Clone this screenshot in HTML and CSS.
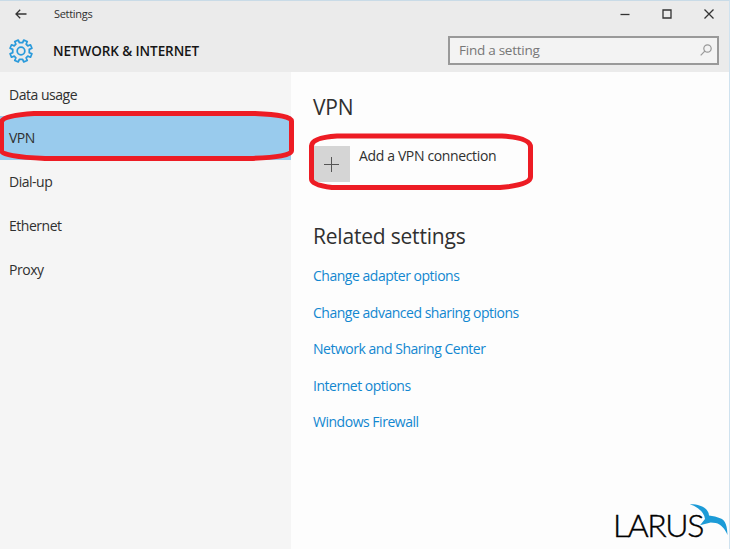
FILE: index.html
```html
<!DOCTYPE html>
<html lang="en">
<head>
<meta charset="utf-8">
<title>Settings</title>
<link rel="stylesheet" href="styles.css">
</head>
<body>
<div class="window">
  <header class="header">
    <div class="titlebar">
      <svg class="back" width="12" height="10" viewBox="0 0 12 10"><path d="M11.5 5H1M5.200.8 1 5l4.200 4.200"/></svg>
      <span class="app-name">Settings</span>
      <div class="controls">
        <svg width="10" height="10" viewBox="0 0 10 10"><path d="M.5 5.500h9"/></svg>
        <svg width="10" height="10" viewBox="0 0 10 10"><path d="M1 1h8v8H1z"/></svg>
        <svg width="10" height="10" viewBox="0 0 10 10"><path d="M.5.5l9 9M9.500.5l-9 9"/></svg>
      </div>
    </div>
    <div class="toolbar">
      <svg class="gear" width="24" height="24" viewBox="1 1 22 22"><path d="M9.500 2 10.500 4.400h3L14.500 2l3.200 1.300-1 2.500 1.500 1.500 2.500-1L22 9.500l-2.400 1v3l2.400 1-1.300 3.200-2.500-1-1.500 1.500 1 2.500L14.500 22l-1-2.400h-3L9.500 22l-3.200-1.300 1-2.500-1.500-1.500-2.500 1L2 14.500l2.400-1v-3L2 9.500l1.300-3.200 2.500 1 1.500-1.500-1-2.500Z"/><circle cx="12" cy="12" r="3.500"/></svg>
      <h1 class="title">NETWORK &amp; INTERNET</h1>
      <div class="search">
        <span>Find a setting</span>
        <svg width="12" height="12" viewBox="0 0 12 12"><circle cx="7.500" cy="4.500" r="3.700"/><path d="M4.800 7.200.7 11.300"/></svg>
      </div>
    </div>
  </header>
  <div class="body">
    <nav class="sidebar">
      <a class="item first">Data usage</a>
      <a class="item selected">VPN</a>
      <a class="item">Dial-up</a>
      <a class="item">Ethernet</a>
      <a class="item">Proxy</a>
    </nav>
    <main class="content">
      <h2 class="heading">VPN</h2>
      <div class="add">
        <span class="plus"><svg width="15" height="15" viewBox="0 0 15 15"><path d="M7.500 0v15M0 7.500h15"/></svg></span>
        <span class="add-label">Add a VPN connection</span>
      </div>
      <h2 class="heading related">Related settings</h2>
      <a class="link">Change adapter options</a>
      <a class="link">Change advanced sharing options</a>
      <a class="link">Network and Sharing Center</a>
      <a class="link">Internet options</a>
      <a class="link">Windows Firewall</a>
    </main>
  </div>
  <svg class="marks" width="730" height="549" viewBox="0 0 730 549">
    <path d="M34 113.500H255Q291.500 115 291.500 121V151Q291.500 157 250 158.500H45Q2.500 156.500 1.500 151V122Q2 115.500 34 113.500Z"/>
    <path d="M337 136H502Q530.500 138 530.500 147V177Q530.500 185 500 187.500H332Q311.500 185 311.500 179V146Q312 137.500 337 136Z"/>
  </svg>
  <div class="logo">
    <span class="logo-text">LARUS</span>
    <svg class="bird" width="40" height="34" viewBox="0 0 40 34"><path d="M.7.200C7-.2 16 2 18.500 7Q20 9 20 11.500L26 12.500 29 13.500C35 15 38 18 38.500 31 36 25 32 20 26.700 19L21.700 18.500 11 21.200 16 15Q15.500 9 8.500 4 5 1.500.7.200Z"/></svg>
  </div>
</div>
</body>
</html>
```

FILE: styles.css
```css
* { box-sizing: border-box; }
body {
  margin: 0;
  font-family: "Open Sans", "Noto Sans", sans-serif;
  font-size: 14px;
  letter-spacing: -.48px;
  color: #303030;
}
svg { fill: none; flex: none; }
h1, h2 { margin: 0; }
.window {
  position: relative;
  display: flex;
  flex-direction: column;
  width: 730px;
  height: 549px;
  overflow: hidden;
  background: #fdfdfd;
  border-top: 1px solid #c9dbe7;
  border-right: 1px solid #cfe2ef;
}
.header { height: 71px; background: #ebebeb; }
.titlebar { display: flex; align-items: center; height: 26px; padding: 0 15px; }
.back { stroke: #333; stroke-width: 1.3; }
.app-name { margin-left: 27px; font-size: 11px; line-height: 14px; letter-spacing: -.3px; }
.controls { display: flex; gap: 32px; margin-left: auto; stroke: #333; stroke-width: 1.300; }
.toolbar { display: flex; align-items: center; height: 47px; padding: 0 10px 0 9px; }
.gear { stroke: #2a9adb; stroke-width: 1.600; stroke-linejoin: round; }
.title { margin-left: 20px; font-size: 13.5px; font-weight: 600; letter-spacing: -.08px; color: #161616; }
.search {
  display: flex;
  align-items: center;
  justify-content: space-between;
  width: 271px;
  height: 29px;
  margin-left: auto;
  padding: 0 5px 1px 9px;
  border: 2px solid #999;
  background: #f3f3f3;
  color: #777;
  font-size: 13.5px;
  letter-spacing: -.25px;
}
.search svg { stroke: #999; stroke-width: 1.200; }
.body { display: flex; flex: 1; }
.sidebar { width: 291px; background: #f5f5f5; }
.item { display: flex; align-items: center; height: 44px; padding: 0 0 1px 9px; }
.first { padding: 1px 0 0 9px; }
.selected { background: #99cbed; }
.content { display: flex; flex: 1; flex-direction: column; align-items: flex-start; padding: 19px 0 0 22px; }
.heading { font-size: 21px; font-weight: 370; line-height: 32px; letter-spacing: -.2px; }
.add { display: flex; height: 36px; margin-top: 23px; }
.plus { display: flex; align-items: center; justify-content: center; width: 37px; background: #d5d5d5; stroke: #555; }
.add-label { margin-left: 9px; line-height: 20px; letter-spacing: -.36px; }
.related { margin: 38px 0 6px; }
.link { height: 36.500px; color: #1287d0; line-height: 36px; }
.marks { position: absolute; left: 0; top: -1px; stroke: #ed1c24; stroke-width: 5; }
.logo { position: absolute; left: 613px; top: 502px; width: 116px; height: 46px; }
.logo-text { display: block; font: 300 32px/44px Lato, sans-serif; letter-spacing: -1.400px; color: #000; -webkit-text-stroke: .4px #000; }
.bird { position: absolute; left: 76px; top: 1px; fill: #1c9bd7; }
```
